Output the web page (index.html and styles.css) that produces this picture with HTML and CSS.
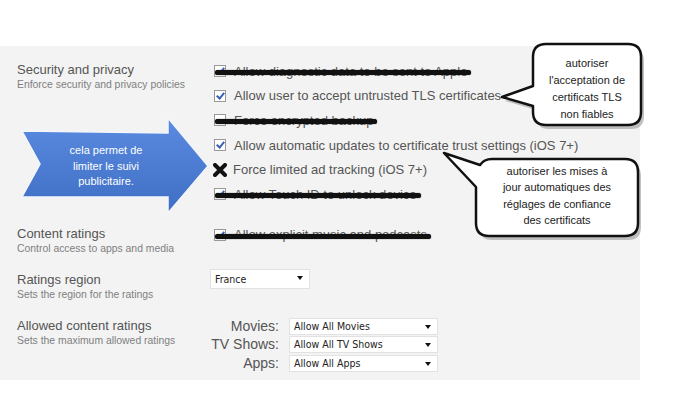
FILE: index.html
```html
<!DOCTYPE html>
<html>
<head>
    <title>Restrictions</title>
    <link rel="stylesheet" href="styles.css">
</head>
<body>
<div class="page">
    <div class="panel">
        <div class="section">
            <div class="info">
                <div class="title">Security and privacy</div>
                <div class="sub">Enforce security and privacy policies</div>
            </div>
            <div class="options">
                <div class="item struck"><span class="box checked"></span>Allow diagnostic data to be sent to Apple</div>
                <div class="item"><span class="box checked"></span>Allow user to accept untrusted TLS certificates</div>
                <div class="item struck"><span class="box"></span>Force encrypted backup</div>
                <div class="item"><span class="box checked"></span>Allow automatic updates to certificate trust settings (iOS 7+)</div>
                <div class="item">
                    <svg class="cross" width="14" height="14" viewBox="0 0 14 14"><path d="M2 2 L12 12 M12 2 L2 12" stroke="#111" stroke-width="4" stroke-linecap="round"/></svg>Force limited ad tracking (iOS 7+)
                </div>
                <div class="item struck"><span class="box checked"></span>Allow Touch ID to unlock device</div>
            </div>
        </div>

        <div class="section short">
            <div class="info">
                <div class="title">Content ratings</div>
                <div class="sub">Control access to apps and media</div>
            </div>
            <div class="options">
                <div class="item struck"><span class="box checked"></span>Allow explicit music and podcasts</div>
            </div>
        </div>

        <div class="section short">
            <div class="info">
                <div class="title">Ratings region</div>
                <div class="sub">Sets the region for the ratings</div>
            </div>
            <div class="options">
                <div class="select region">France</div>
            </div>
        </div>

        <div class="section">
            <div class="info">
                <div class="title">Allowed content ratings</div>
                <div class="sub">Sets the maximum allowed ratings</div>
            </div>
            <div class="ratings">
                <span class="label">Movies:</span><div class="select">Allow All Movies</div>
                <span class="label">TV Shows:</span><div class="select">Allow All TV Shows</div>
                <span class="label">Apps:</span><div class="select">Allow All Apps</div>
            </div>
        </div>
    </div>

    <!-- blue arrow note -->
    <div class="arrow">
        <svg width="200" height="110" viewBox="0 0 200 110">
            <defs>
                <linearGradient id="blue" x1="0" y1="0" x2="0" y2="1">
                    <stop offset="0" stop-color="#5a8be0"/>
                    <stop offset="1" stop-color="#3f6fc4"/>
                </linearGradient>
            </defs>
            <polygon points="2,15 148,17 148,2 188,50 148,97 148,81 2,81 20,48" fill="url(#blue)" stroke="#f4f6fb" stroke-width="1.5"/>
        </svg>
        <div class="arrow-text">cela permet de<br>limiter le suivi<br>publicitaire.</div>
    </div>

    <!-- callouts -->
    <div class="bubble bubble-tls">
        <svg width="150" height="92" viewBox="0 0 150 92">
            <path d="M46 2 H128 Q141 2 141 15 V70 Q141 83 128 83 H46 Q33 83 33 70 V64 L2 55 L33 44 V15 Q33 2 46 2 Z" fill="#9a9a9a" transform="translate(3,4)" opacity="0.6"/>
            <path d="M46 2 H128 Q141 2 141 15 V70 Q141 83 128 83 H46 Q33 83 33 70 V64 L2 55 L33 44 V15 Q33 2 46 2 Z" fill="#fff" stroke="#111" stroke-width="2.5" stroke-linejoin="round"/>
        </svg>
        <div class="bubble-text">autoriser<br>l'acceptation de<br>certificats TLS<br>non fiables</div>
    </div>

    <div class="bubble bubble-trust">
        <svg width="205" height="100" viewBox="0 0 205 100">
            <path d="M50 14 H183 Q196 14 196 27 V78 Q196 91 183 91 H47 Q34 91 34 78 V42 L2 8 L38 20 Q42 14 50 14 Z" fill="#9a9a9a" transform="translate(3,4)" opacity="0.6"/>
            <path d="M50 14 H183 Q196 14 196 27 V78 Q196 91 183 91 H47 Q34 91 34 78 V42 L2 8 L38 20 Q42 14 50 14 Z" fill="#fff" stroke="#111" stroke-width="2.5" stroke-linejoin="round"/>
        </svg>
        <div class="bubble-text">autoriser les mises à<br>jour automatiques des<br>réglages de confiance<br>des certificats</div>
    </div>
</div>
</body>
</html>
```

FILE: styles.css
```css
body {
    margin: 0;
    padding: 0;
    background-color: #fff;
    font-family: "Liberation Sans", Arial, sans-serif;
}

.page {
    position: relative;
    width: 700px;
    height: 417px;
    overflow: hidden;
}

.panel {
    margin-top: 46px;
    width: 640px;
    height: 334px;
    box-sizing: border-box;
    padding: 13px 0 0 17px;
    background-color: #f3f3f3;
}

.section {
    display: flex;
    margin-bottom: 16px;
}

.section.short {
    margin-bottom: 14px;
}

.info {
    width: 197px;
    flex-shrink: 0;
}

.title {
    font-size: 13px;
    line-height: 18px;
    color: #555;
    padding-top: 2px;
}

.sub {
    font-size: 10.4px;
    line-height: 12px;
    color: #808080;
}

.options {
    display: flex;
    flex-direction: column;
}

.item {
    position: relative;
    display: flex;
    align-items: center;
    align-self: flex-start;
    height: 24.6px;
    font-size: 13px;
    color: #555;
}

.box {
    width: 10px;
    height: 10px;
    margin-right: 8px;
    border: 1px solid #999;
    background: #fff;
    position: relative;
}

.box.checked::after {
    content: "";
    position: absolute;
    left: 3px;
    top: 0px;
    width: 3px;
    height: 6px;
    border: solid #3a5fb8;
    border-width: 0 2px 2px 0;
    transform: rotate(40deg);
}

.cross {
    margin-left: -1px;
    margin-right: 6px;
}

/* blacked out options */
.item.struck::after {
    content: "";
    position: absolute;
    left: 1px;
    right: -4px;
    top: 11px;
    height: 5px;
    border-radius: 3px;
    background: #111;
    box-shadow: 0 0 1px #111;
}

.select {
    position: relative;
    box-sizing: border-box;
    width: 149px;
    height: 17px;
    padding-left: 4px;
    border: 1px solid #e2e2e2;
    background: #fff;
    font-family: "DejaVu Sans Condensed", "DejaVu Sans", sans-serif;
    font-size: 10.5px;
    line-height: 15px;
    color: #222;
}

.select::after {
    content: "";
    position: absolute;
    right: 6px;
    top: 6px;
    border-left: 3.5px solid transparent;
    border-right: 3.5px solid transparent;
    border-top: 4px solid #111;
}

.select.region {
    width: 100px;
    height: 20px;
    line-height: 18px;
    margin-left: -4px;
    margin-top: 0;
}

.ratings {
    display: grid;
    grid-template-columns: 70px 149px;
    column-gap: 10px;
    row-gap: 1.5px;
    margin-left: -5px;
    margin-top: 3px;
}

.label {
    text-align: right;
    white-space: nowrap;
    font-size: 14px;
    line-height: 17px;
    color: #555;
}

.arrow {
    position: absolute;
    left: 20px;
    top: 116px;
    width: 200px;
    height: 110px;
}

.arrow svg {
    position: absolute;
    left: 0;
    top: 0;
}

.arrow-text {
    position: absolute;
    left: 20px;
    top: 27px;
    width: 110px;
    padding-left: 11px;
    text-align: center;
    font-size: 11px;
    line-height: 15.5px;
    color: #fff;
}

.bubble {
    position: absolute;
}

.bubble svg {
    position: absolute;
    left: 0;
    top: 0;
}

.bubble-text {
    position: absolute;
    text-align: center;
    font-size: 11px;
    line-height: 17px;
    color: #222;
}

.bubble-tls {
    left: 500px;
    top: 42px;
    width: 150px;
    height: 92px;
}

.bubble-tls .bubble-text {
    left: 33px;
    top: 13px;
    width: 108px;
}

.bubble-trust {
    left: 442px;
    top: 145px;
    width: 205px;
    height: 100px;
}

.bubble-trust .bubble-text {
    left: 34px;
    top: 18px;
    width: 162px;
    line-height: 16.3px;
}
```
